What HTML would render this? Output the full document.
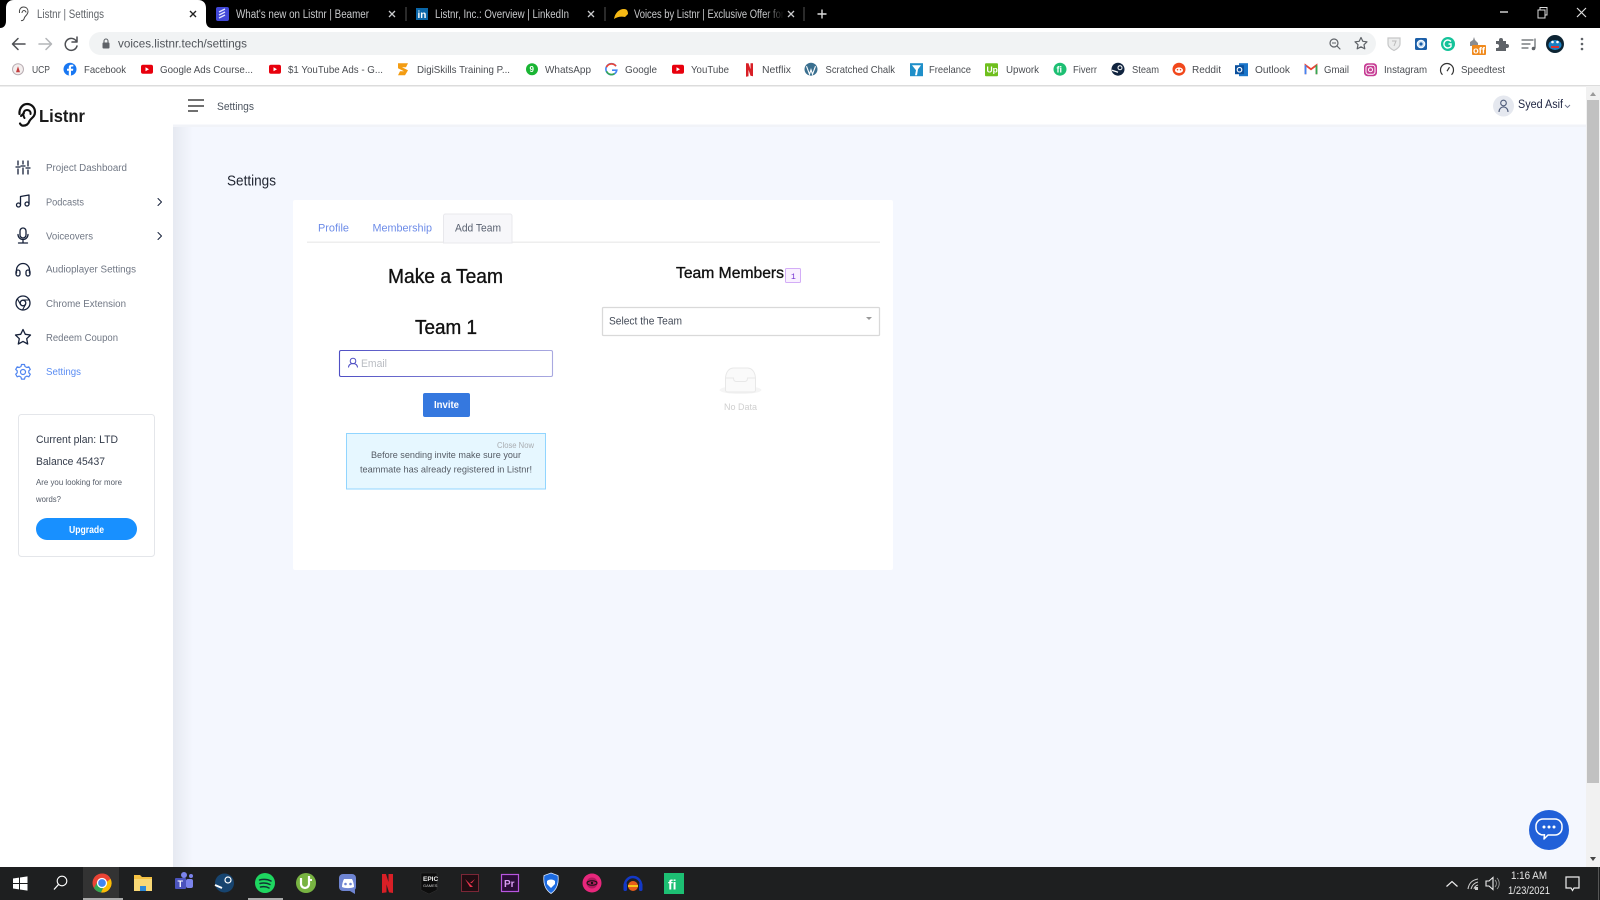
<!DOCTYPE html>
<html lang="en"><head><meta charset="utf-8"><title>Listnr | Settings</title>
<style>
html,body{margin:0;padding:0;width:1600px;height:900px;overflow:hidden;background:#fff}
svg{display:block;filter:blur(.3px)}
text{font-family:"Liberation Sans",sans-serif;white-space:pre}
.tab{font-size:11.5px;fill:#c9cacc}
.bm{font-size:10.5px;fill:#4a4d52}
.menu{font-size:10px;fill:#707784}
.ic{fill:none;stroke:#16213a;stroke-width:1.3;stroke-linecap:round;stroke-linejoin:round}
.tb{fill:none;stroke:#5f6368;stroke-width:1.5;stroke-linecap:round;stroke-linejoin:round}
</style></head><body>
<svg xmlns="http://www.w3.org/2000/svg" width="1600" height="900" viewBox="0 0 1600 900">
<defs>
<linearGradient id="sh" x1="0" x2="1" y1="0" y2="0"><stop offset="0" stop-color="#e6e9f1"/><stop offset="1" stop-color="#f4f7fe"/></linearGradient>
<linearGradient id="fade" x1="0" x2="1" y1="0" y2="0"><stop offset="0" stop-color="#000" stop-opacity="0"/><stop offset="1" stop-color="#000"/></linearGradient>
<linearGradient id="inp" x1="0" x2="1" y1="0" y2="0"><stop offset="0" stop-color="#4f4fc4"/><stop offset="1" stop-color="#a9a9e0"/></linearGradient>
</defs>
<!-- page -->
<rect width="1600" height="900" fill="#fff"/>
<rect x="173" y="126" width="1413" height="741" fill="#f4f7fe"/>
<rect x="173" y="126" width="20" height="741" fill="url(#sh)"/>
<rect x="173" y="124.500" width="1413" height="2.500" fill="#f1f3f8"/>

<!-- tab strip -->
<rect width="1600" height="28" fill="#000"/>
<path d="M0 28C4 28 6 25 6 21V8C6 3 9 0 14 0H198C203 0 206 3 206 8V21C206 25 208 28 212 28Z" fill="#fff"/>
<path d="M19.500 13C19 9 21 7 23.500 7 26.500 7 28 9 28 11.500 28 14.500 25.500 15.500 24.500 17.500 24 20 22.500 21 21 20.500M22 13c0-1.500 1-2.500 2-2.500s2 1 2 2" fill="none" stroke="#444" stroke-width="1"/>
<text x="37" y="18" class="tab" style="fill:#5f6368" textLength="67" lengthAdjust="spacingAndGlyphs">Listnr | Settings</text>
<path d="M190 11l6 6M196 11l-6 6" stroke="#222" stroke-width="1.400"/>
<rect x="216" y="7" width="13" height="14" rx="2" fill="#4148d8"/>
<path d="M219 12l6-3M219 15l6-3M219 18l6-3" stroke="#dfe3ff" stroke-width="1.400"/>
<text x="236" y="18" class="tab" textLength="133" lengthAdjust="spacingAndGlyphs">What's new on Listnr | Beamer</text>
<path d="M389 11l6 6M395 11l-6 6" stroke="#c9cacc" stroke-width="1.300"/>
<rect x="405.500" y="7" width="1" height="14" fill="#555"/>
<rect x="416" y="8" width="12" height="12" fill="#0a66a8"/>
<text x="417.500" y="18" style="font-size:10px;font-weight:bold;fill:#fff">in</text>
<text x="435" y="18" class="tab" textLength="134" lengthAdjust="spacingAndGlyphs">Listnr, Inc.: Overview | LinkedIn</text>
<path d="M588 11l6 6M594 11l-6 6" stroke="#c9cacc" stroke-width="1.300"/>
<rect x="604.500" y="7" width="1" height="14" fill="#555"/>
<path d="M614 19c1-6 5-10 10-10 3 0 4 2 4 5l-3 3c-4-1-8 0-11 2Z" fill="#f6b915"/>
<text x="634" y="18" class="tab" textLength="150" lengthAdjust="spacingAndGlyphs">Voices by Listnr | Exclusive Offer for</text>
<rect x="765" y="6" width="19" height="16" fill="url(#fade)"/>
<path d="M788 11l6 6M794 11l-6 6" stroke="#c9cacc" stroke-width="1.300"/>
<rect x="803.500" y="7" width="1" height="14" fill="#555"/>
<path d="M822 9.500v9M817.500 14h9" stroke="#ddd" stroke-width="1.400"/>
<path d="M1500 12h8" stroke="#ddd" stroke-width="1.400"/>
<path d="M1538 10h7v8h-7ZM1540 10V7.500h7V15h-2" fill="none" stroke="#ddd" stroke-width="1"/>
<path d="M1577 8l9 9M1586 8l-9 9" stroke="#ddd" stroke-width="1.200"/>

<!-- toolbar -->
<path d="M25 44H13M18 38.500L12.500 44l5.500 5.500" class="tb" style="stroke:#4d4f53"/>
<path d="M39 44h12M46 38.500l5.500 5.500-5.500 5.500" class="tb" style="stroke:#b3b5b8"/>
<path d="M76.500 41.500a6 6 0 1 0 .5 4.500M77 37v5h-5" class="tb" style="stroke:#4d4f53"/>
<rect x="89" y="32" width="1287" height="23" rx="11.500" fill="#f1f3f4"/>
<rect x="102.500" y="42.500" width="7" height="6" rx="1" fill="#5f6368"/>
<path d="M104 43v-2a2 2 0 0 1 4 0v2" fill="none" stroke="#5f6368" stroke-width="1.100"/>
<text x="118" y="47.500" style="font-size:12px;fill:#50545a" textLength="129" lengthAdjust="spacingAndGlyphs">voices.listnr.tech/settings</text>
<circle cx="1334" cy="43" r="4" class="tb" style="stroke-width:1.200"/><path d="M1337 46l3 3" class="tb" style="stroke-width:1.200"/><path d="M1332 43h4" stroke="#5f6368"/>
<path d="M1361 37.500l1.800 3.800 4.200.5-3 2.900.8 4.100-3.800-2-3.800 2 .8-4.100-3-2.900 4.200-.5Z" class="tb" style="stroke-width:1.200"/>
<path d="M1388 38h12v6c0 3-3 5-6 6.500-3-1.500-6-3.500-6-6.500Z" fill="#eceded" stroke="#c6c7c8" stroke-width="1.200"/><path d="M1392 41h4l-2 5" fill="none" stroke="#bbb"/>
<rect x="1415" y="38" width="12" height="12" rx="1.500" fill="#1c5fa8"/><circle cx="1421" cy="44" r="3.800" fill="#cfe3f5" stroke="#fff"/><circle cx="1421" cy="44" r="1.600" fill="#1c5fa8"/>
<circle cx="1448" cy="44" r="7" fill="#15c39a"/><path d="M1451 41.500a4 4 0 1 0 0 5v-2.500h-2.500" fill="none" stroke="#fff" stroke-width="1.400"/>
<path d="M1470 46v-4l3-2 1-3 1 3 3 3v3Z" fill="#8a8d92"/>
<rect x="1472" y="45" width="14" height="10" rx="1" fill="#f08a1d"/>
<text x="1473" y="53.500" style="font-size:9px;font-weight:bold;fill:#fff" textLength="12" lengthAdjust="spacingAndGlyphs">off</text>
<path d="M1496 41h3v-1a2 2 0 0 1 4 0v1h3v3h1a2 2 0 0 1 0 4h-1v3h-10v-3h1a2 2 0 0 0 0-4h-1Z" fill="#5f6368"/>
<path d="M1522 40h11M1522 44h8M1522 48h6" class="tb" style="stroke-width:1.200"/><path d="M1535 39v9" class="tb" style="stroke-width:1.200"/><circle cx="1533.500" cy="48.500" r="1.800" fill="#5f6368"/>
<circle cx="1555" cy="44" r="9" fill="#0d2433"/><ellipse cx="1555" cy="45" rx="6.500" ry="5" fill="#1a80c4"/><path d="M1551 46h8v2h-8Z" fill="#d33"/><circle cx="1552.500" cy="42" r="1.300" fill="#fff"/><circle cx="1557.500" cy="42" r="1.300" fill="#fff"/>
<circle cx="1582" cy="39" r="1.300" fill="#5f6368"/><circle cx="1582" cy="44" r="1.300" fill="#5f6368"/><circle cx="1582" cy="49" r="1.300" fill="#5f6368"/>

<!-- bookmarks -->
<rect x="0" y="85" width="1600" height="1.500" fill="#dcdcdc"/>
<g transform="translate(0,-.8)">
<circle cx="18" cy="70" r="5.500" fill="#f3eeee" stroke="#b9aeb3"/><path d="M16 73l2-6 2 6Z" fill="#c43c3c"/>
<text x="32" y="74" class="bm" textLength="18" lengthAdjust="spacingAndGlyphs">UCP</text>
<circle cx="70" cy="70" r="6.500" fill="#1877f2"/><path d="M71 76.500v-5h2l.3-2H71v-1.200c0-.7.3-1 1-1h1.300v-1.800H71.500c-1.900 0-2.700 1-2.700 2.700v1.300H67v2h1.800v5Z" fill="#fff"/>
<text x="84" y="74" class="bm" textLength="42" lengthAdjust="spacingAndGlyphs">Facebook</text>
<rect x="141" y="65.500" width="12" height="9" rx="2" fill="#e8000d"/><path d="M145.500 68v4l3.500-2Z" fill="#fff"/>
<text x="160" y="74" class="bm" textLength="93" lengthAdjust="spacingAndGlyphs">Google Ads Course...</text>
<rect x="269" y="65.500" width="12" height="9" rx="2" fill="#e8000d"/><path d="M273.500 68v4l3.500-2Z" fill="#fff"/>
<text x="288" y="74" class="bm" textLength="95" lengthAdjust="spacingAndGlyphs">$1 YouTube Ads - G...</text>
<path d="M398 64h10l-2 4h-4l6 3-3 5h-7l2-4h4l-6-3Z" fill="#f39c12"/>
<text x="417" y="74" class="bm" textLength="93" lengthAdjust="spacingAndGlyphs">DigiSkills Training P...</text>
<circle cx="532" cy="70" r="6" fill="#19b533"/><text x="529.500" y="73" style="font-size:8px;font-weight:bold;fill:#fff">9</text>
<text x="545" y="74" class="bm" textLength="46" lengthAdjust="spacingAndGlyphs">WhatsApp</text>
<path d="M616 67a5.500 5.500 0 1 0 .8 4h-4.800" fill="none" stroke="#4285f4" stroke-width="1.600"/><path d="M616 67a5.500 5.500 0 0 0-9.500 1" fill="none" stroke="#ea4335" stroke-width="1.600"/><path d="M606.500 72a5.500 5.500 0 0 0 8 2.500" fill="none" stroke="#34a853" stroke-width="1.600"/>
<text x="625" y="74" class="bm" textLength="32" lengthAdjust="spacingAndGlyphs">Google</text>
<rect x="672" y="65.500" width="12" height="9" rx="2" fill="#e8000d"/><path d="M676.500 68v4l3.500-2Z" fill="#fff"/>
<text x="691" y="74" class="bm" textLength="38" lengthAdjust="spacingAndGlyphs">YouTube</text>
<path d="M746 64h2.500l2 6v-6h2.500v13l-2.500-.5-2-6v6.500l-2.500.5Z" fill="#d81f26"/>
<text x="762" y="74" class="bm" textLength="29" lengthAdjust="spacingAndGlyphs">Netflix</text>
<circle cx="811" cy="70" r="6.500" fill="#3a6f8f"/><path d="M806.500 67l3 8 1.500-4.500 1.500 4.500 3-8" fill="none" stroke="#fff" stroke-width="1.100"/>
<text x="825.500" y="74" class="bm" textLength="69.500" lengthAdjust="spacingAndGlyphs">Scratched Chalk</text>
<rect x="910" y="64" width="13" height="13" fill="#1f8fc9"/><path d="M912 66h9l-3 4-1 6h-2l1-5Z" fill="#fff"/>
<text x="929" y="74" class="bm" textLength="42" lengthAdjust="spacingAndGlyphs">Freelance</text>
<rect x="985" y="64" width="13" height="13" rx="1" fill="#6fbf1d"/><text x="986.500" y="73.500" style="font-size:8.500px;font-weight:bold;fill:#fff">Up</text>
<text x="1006" y="74" class="bm" textLength="33" lengthAdjust="spacingAndGlyphs">Upwork</text>
<circle cx="1060" cy="70" r="6.500" fill="#1dbf73"/><text x="1056.500" y="73.500" style="font-size:9px;font-weight:bold;fill:#fff">fi</text>
<text x="1073" y="74" class="bm" textLength="24" lengthAdjust="spacingAndGlyphs">Fiverr</text>
<circle cx="1118" cy="70" r="6.500" fill="#10243f"/><circle cx="1120" cy="68.500" r="2" fill="none" stroke="#fff"/><path d="M1112 71l6 2" stroke="#fff" stroke-width="1.300"/>
<text x="1132" y="74" class="bm" textLength="27" lengthAdjust="spacingAndGlyphs">Steam</text>
<circle cx="1179" cy="70" r="6.500" fill="#f1481c"/><ellipse cx="1179" cy="71" rx="4" ry="2.800" fill="#fff"/><circle cx="1177.500" cy="70.500" r=".8" fill="#f1481c"/><circle cx="1180.500" cy="70.500" r=".8" fill="#f1481c"/>
<text x="1192" y="74" class="bm" textLength="29" lengthAdjust="spacingAndGlyphs">Reddit</text>
<rect x="1239" y="64" width="9" height="13" fill="#1a75c9"/><rect x="1235" y="66" width="9" height="9" fill="#0b4f9c"/><circle cx="1239.500" cy="70.500" r="2.300" fill="none" stroke="#fff" stroke-width="1.100"/>
<text x="1255" y="74" class="bm" textLength="35" lengthAdjust="spacingAndGlyphs">Outlook</text>
<path d="M1305.500 75V66l5.500 4 5.500-4v9" fill="none" stroke="#ea4335" stroke-width="1.800"/><path d="M1305.500 66v9" stroke="#4285f4" stroke-width="1.800"/><path d="M1316.500 66v9" stroke="#34a853" stroke-width="1.800"/>
<text x="1324" y="74" class="bm" textLength="25" lengthAdjust="spacingAndGlyphs">Gmail</text>
<rect x="1364" y="64" width="13" height="13" rx="3.500" fill="#c63b93"/><rect x="1366" y="66" width="9" height="9" rx="2.500" fill="none" stroke="#fff"/><circle cx="1370.500" cy="70.500" r="2" fill="none" stroke="#fff"/>
<text x="1384" y="74" class="bm" textLength="43" lengthAdjust="spacingAndGlyphs">Instagram</text>
<path d="M1442.500 75.500a6.500 6.500 0 1 1 9 0" fill="none" stroke="#333" stroke-width="1.200"/><path d="M1447 72l2.500-4" stroke="#333" stroke-width="1.200"/>
<text x="1461" y="74" class="bm" textLength="44" lengthAdjust="spacingAndGlyphs">Speedtest</text>
</g>

<!-- header -->
<path d="M188 100h16M188 106h16M188 111h10" stroke="#1a1a1a" stroke-width="1.300"/>
<text x="217" y="110" style="font-size:11px;fill:#4d5560" textLength="37" lengthAdjust="spacingAndGlyphs">Settings</text>
<circle cx="1503.500" cy="106" r="10.500" fill="#e5e8ef"/>
<circle cx="1503.500" cy="103" r="2.800" fill="none" stroke="#4d5a78" stroke-width="1.100"/><path d="M1499 112c0-3 2-5 4.500-5s4.500 2 4.500 5" fill="none" stroke="#4d5a78" stroke-width="1.100"/>
<text x="1518" y="108" style="font-size:11.500px;fill:#1c2340" textLength="45" lengthAdjust="spacingAndGlyphs">Syed Asif</text>
<path d="M1565 105l2.500 2.500 2.500-2.500" fill="none" stroke="#6a7088" stroke-width=".9"/>

<!-- sidebar logo -->
<path d="M19.500 114C19 108 23 104 27 104 32 104 35 108 35 112 35 117 31 118 29.500 121 28 125 25 126 22 125.500 21 125 20.500 124.500 20 123.500" fill="none" stroke="#111" stroke-width="2.200" stroke-linecap="round"/>
<path d="M24.500 118C22 114 24 110 27 110 29.500 110 31 112 30.500 114M24 113l-3 3" fill="none" stroke="#111" stroke-width="2" stroke-linecap="round"/>
<text x="39" y="122" style="font-size:17.500px;font-weight:bold;fill:#1a1a1a" textLength="46" lengthAdjust="spacingAndGlyphs">Listnr</text>

<!-- menu -->
<path d="M18 161v4M18 169v5M23 161v3M23 168v6M28 161v5M28 170v4M16 167h4M21 166h4M26 168h4" class="ic"/>
<text x="46" y="171" class="menu" textLength="81" lengthAdjust="spacingAndGlyphs">Project Dashboard</text>
<path d="M20.500 205v-8.500l8.500-1.500v9" class="ic"/><circle cx="18.500" cy="205" r="2" class="ic"/><circle cx="27" cy="204" r="2" class="ic"/>
<text x="46" y="205.500" class="menu" textLength="38" lengthAdjust="spacingAndGlyphs">Podcasts</text>
<path d="M158 198.500l3.500 3.500-3.500 3.500" class="ic" style="stroke-width:1"/>
<rect x="20" y="228" width="6" height="10" rx="3" class="ic"/><path d="M18 234.500a5 5 0 0 0 10 0M23 240v2.500M18.500 243h9" class="ic"/>
<text x="46" y="239.500" class="menu" textLength="47" lengthAdjust="spacingAndGlyphs">Voiceovers</text>
<path d="M158 232.500l3.500 3.500-3.500 3.500" class="ic" style="stroke-width:1"/>
<path d="M16.500 273v-3a6.500 6.500 0 0 1 13 0v3" class="ic"/><rect x="16" y="270" width="4" height="6" rx="2" class="ic"/><rect x="26" y="270" width="4" height="6" rx="2" class="ic"/>
<text x="46" y="272.500" class="menu" textLength="90" lengthAdjust="spacingAndGlyphs">Audioplayer Settings</text>
<circle cx="23" cy="303" r="7" class="ic"/><circle cx="23" cy="303" r="2.800" class="ic"/><path d="M23 300h6.500M20.500 304.500l-3-5.500M25.500 304.500l-3 5.500" class="ic" style="stroke-width:1.100"/>
<text x="46" y="307" class="menu" textLength="80" lengthAdjust="spacingAndGlyphs">Chrome Extension</text>
<path d="M23 329.500l2.300 4.800 5.200.7-3.800 3.700 1 5.300-4.700-2.600-4.700 2.600 1-5.300-3.800-3.700 5.200-.7Z" class="ic"/>
<text x="46" y="341" class="menu" textLength="72" lengthAdjust="spacingAndGlyphs">Redeem Coupon</text>
<circle cx="23" cy="372" r="2.500" fill="none" stroke="#4f85f0" stroke-width="1.200"/>
<path d="M21.500 364.500h3l.5 2 1.800 1 2-.7 1.500 2.600-1.500 1.400v2l1.500 1.400-1.500 2.600-2-.7-1.800 1-.5 2h-3l-.5-2-1.800-1-2 .7-1.500-2.600 1.500-1.400v-2l-1.500-1.400 1.500-2.600 2 .7 1.800-1Z" fill="none" stroke="#4f85f0" stroke-width="1.200" stroke-linejoin="round"/>
<text x="46" y="375" class="menu" style="fill:#5b8df3" textLength="35" lengthAdjust="spacingAndGlyphs">Settings</text>

<!-- plan card -->
<rect x="18.500" y="414.500" width="136" height="142" rx="3" fill="#fff" stroke="#e4e6ea"/>
<text x="36" y="443" style="font-size:11px;fill:#333b4a" textLength="82" lengthAdjust="spacingAndGlyphs">Current plan: LTD</text>
<text x="36" y="465" style="font-size:11px;fill:#333b4a" textLength="69" lengthAdjust="spacingAndGlyphs">Balance 45437</text>
<text x="36" y="485" style="font-size:8.500px;fill:#555c68" textLength="86" lengthAdjust="spacingAndGlyphs">Are you looking for more</text>
<text x="36" y="502" style="font-size:8.500px;fill:#555c68" textLength="25" lengthAdjust="spacingAndGlyphs">words?</text>
<rect x="36" y="518" width="101" height="22" rx="11" fill="#1890ff"/>
<text x="69" y="533" style="font-size:10px;font-weight:bold;fill:#fff" textLength="35" lengthAdjust="spacingAndGlyphs">Upgrade</text>

<!-- page title -->
<text x="227" y="185.500" style="font-size:15px;fill:#1f2430" textLength="49" lengthAdjust="spacingAndGlyphs">Settings</text>

<!-- main card -->
<rect x="293" y="200" width="600" height="370" rx="2" fill="#fff"/>
<rect x="307" y="241.500" width="573" height="1.500" fill="#eeeeee"/>
<text x="318" y="231.500" style="font-size:11px;fill:#6d8ce8" textLength="31" lengthAdjust="spacingAndGlyphs">Profile</text>
<text x="372.500" y="231.500" style="font-size:11px;fill:#6d8ce8" textLength="59.500" lengthAdjust="spacingAndGlyphs">Membership</text>
<path d="M443.500 243V216a2 2 0 0 1 2-2H510a2 2 0 0 1 2 2v27Z" fill="#f7f7fa" stroke="#e8e8ec"/>
<text x="455" y="231.500" style="font-size:11px;fill:#596170" textLength="46" lengthAdjust="spacingAndGlyphs">Add Team</text>
<text x="388" y="283" style="font-size:20px;fill:#111" stroke="#111" stroke-width=".35" textLength="115" lengthAdjust="spacingAndGlyphs">Make a Team</text>
<text x="415" y="334" style="font-size:20px;fill:#111" stroke="#111" stroke-width=".35" textLength="62" lengthAdjust="spacingAndGlyphs">Team 1</text>
<rect x="339.500" y="350.500" width="213" height="26" rx="1.500" fill="#fff" stroke="url(#inp)" stroke-width="1.100"/>
<circle cx="353" cy="361" r="2.800" fill="none" stroke="#4f4fc4" stroke-width="1"/><path d="M348.500 367.500c0-2.500 2-4 4.500-4s4.500 1.500 4.500 4" fill="none" stroke="#4f4fc4" stroke-width="1"/>
<text x="361" y="367" style="font-size:11px;fill:#b9bcc2" textLength="26" lengthAdjust="spacingAndGlyphs">Email</text>
<rect x="423" y="393" width="47" height="24" rx="2" fill="#3578df"/>
<text x="434" y="408" style="font-size:10px;font-weight:bold;fill:#fff" textLength="25" lengthAdjust="spacingAndGlyphs">Invite</text>
<rect x="346.500" y="433.500" width="199" height="55.500" fill="#e6f7ff" stroke="#91d5ff"/>
<text x="497" y="448" style="font-size:8px;fill:#a9acb0" textLength="37" lengthAdjust="spacingAndGlyphs">Close Now</text>
<text x="371" y="458" style="font-size:9.500px;fill:#555b64" textLength="150" lengthAdjust="spacingAndGlyphs">Before sending invite make sure your</text>
<text x="360" y="472.500" style="font-size:9.500px;fill:#555b64" textLength="172" lengthAdjust="spacingAndGlyphs">teammate has already registered in Listnr!</text>

<text x="676" y="278" style="font-size:15.500px;fill:#111" stroke="#111" stroke-width=".35" textLength="108" lengthAdjust="spacingAndGlyphs">Team Members</text>
<rect x="785.500" y="268.500" width="15" height="14" rx="1" fill="#f9f0ff" stroke="#d3adf7"/>
<text x="791" y="279" style="font-size:8px;font-family:'Liberation Mono',monospace;fill:#722ed1">1</text>
<rect x="602.500" y="307.500" width="277" height="28" rx="1" fill="#fff" stroke="#d9d9d9" stroke-width="1.300"/>
<text x="609" y="324.500" style="font-size:11px;fill:#444b58" textLength="73" lengthAdjust="spacingAndGlyphs">Select the Team</text>
<path d="M866 317h6l-3 3Z" fill="#999"/>
<ellipse cx="740.500" cy="390" rx="21" ry="4" fill="#f5f5f5"/>
<path d="M725.500 379c0-6 3-11 8-11h14c5 0 8 5 8 11v11a2 2 0 0 1-2 2h-26a2 2 0 0 1-2-2Z" fill="#fafafa" stroke="#e8e8e8"/>
<path d="M725.500 378h8c0 2.500 1 3.500 3 3.500h8c2 0 3-1 3-3.500h8" fill="none" stroke="#e8e8e8"/>
<text x="724" y="410" style="font-size:9.500px;fill:#cfcfcf" textLength="33" lengthAdjust="spacingAndGlyphs">No Data</text>

<!-- scrollbar -->
<rect x="1586" y="86" width="14" height="781" fill="#f1f1f1"/>
<path d="M1590 96l3-4 3 4Z" fill="#9a9a9a"/>
<rect x="1587" y="100" width="12" height="683" fill="#c1c1c1"/>
<path d="M1590 857l3 4 3-4Z" fill="#444"/>

<!-- chat -->
<circle cx="1549" cy="830" r="20" fill="#2160d8"/>
<path d="M1543 819h12a7 7 0 0 1 7 7v2a7 7 0 0 1-7 7h-7l-4 4 .5-4.300a7 7 0 0 1-8.500-6.700v-2a7 7 0 0 1 7-7Z" fill="none" stroke="#fff" stroke-width="1.500" stroke-linejoin="round"/>
<circle cx="1544" cy="827" r="1.500" fill="#fff"/><circle cx="1549" cy="827" r="1.500" fill="#fff"/><circle cx="1554" cy="827" r="1.500" fill="#fff"/>

<!-- taskbar -->
<rect y="867" width="1600" height="33" fill="#1e1f20"/>
<rect x="83" y="867" width="36" height="33" fill="#333"/>
<rect x="83" y="898" width="40" height="2" fill="#aaa"/><rect x="248" y="898" width="35" height="2" fill="#aaa"/>
<path d="M13 878.500l6-.9v5.400h-6ZM20 877.500l7.500-1.100v6.600H20ZM13 884h6v5.400l-6-.9ZM20 884h7.500v6.600l-7.500-1.100Z" fill="#fff"/>
<circle cx="62" cy="881" r="4.800" fill="none" stroke="#fff" stroke-width="1.100"/><path d="M58.500 884.500l-4.500 5" stroke="#fff" stroke-width="1.300"/>
<circle cx="102" cy="883" r="9.500" fill="#ea4335"/><path d="M102 873.500a9.500 9.500 0 0 1 8.500 5.200H102Z" fill="#ea4335"/><path d="M110.500 878.700A9.500 9.500 0 0 1 101 892.500l4-9Z" fill="#fbbc05"/><path d="M94 888a9.500 9.500 0 0 0 7 4.500l4-9-8-1Z" fill="#34a853"/><circle cx="102" cy="883" r="4.500" fill="#4285f4" stroke="#fff" stroke-width="1.300"/>
<path d="M134 875h6l2 2h10v14h-18Z" fill="#f5c243"/><rect x="134" y="879" width="18" height="12" fill="#f8d876"/><path d="M140 891v-5h6v5" fill="#2b88d8"/>
<rect x="175" y="878" width="11" height="11" rx="1" fill="#4b53bc"/><text x="177.500" y="887" style="font-size:9px;font-weight:bold;fill:#fff">T</text><circle cx="184" cy="875" r="3" fill="#7b83eb"/><rect x="186" y="879" width="7" height="9" rx="2" fill="#7b83eb"/><circle cx="191" cy="876" r="2" fill="#7b83eb"/>
<circle cx="224.500" cy="883" r="9.500" fill="#17446f"/><circle cx="228" cy="880" r="3" fill="none" stroke="#fff" stroke-width="1.200"/><path d="M215 885l7 3" stroke="#fff" stroke-width="2"/>
<circle cx="265" cy="883" r="10" fill="#1ed760"/><path d="M259.500 880c4-1 8-.8 11.500 1M260 883.500c3.500-.8 7-.6 10 1M260.500 887c3-.6 6-.4 8.500 1" fill="none" stroke="#133" stroke-width="1.500" stroke-linecap="round"/>
<circle cx="306" cy="883" r="10" fill="#78b342"/><path d="M301 878v6a4 4 0 0 0 8 0v-8" fill="none" stroke="#fff" stroke-width="2.200"/><path d="M309 880h3" stroke="#fff" stroke-width="2"/>
<rect x="339" y="874" width="17" height="17" rx="4" fill="#6f85d2"/><path d="M350 891l5 3v-4Z" fill="#6f85d2"/><path d="M342 887c0-3 1-6 2-8h8c1 2 2 5 2 8-3 1.500-9 1.500-12 0Z" fill="#fff"/><circle cx="345.500" cy="884" r="1.300" fill="#6f85d2"/><circle cx="350.500" cy="884" r="1.300" fill="#6f85d2"/>
<path d="M382 874h4l2.500 8v-8H393v19l-4-.6-2.500-8v8l-4.500.6Z" fill="#d81f26"/>
<path d="M421 873h16v17l-8 4-8-4Z" fill="#0d0d0d" stroke="#333" stroke-width=".5"/><text x="423" y="881" style="font-size:6.500px;font-weight:bold;fill:#eee">EPIC</text><text x="423" y="887" style="font-size:4px;fill:#ccc">GAMES</text>
<rect x="461.500" y="874.500" width="17" height="17" fill="#200d12" stroke="#7b2636"/><path d="M465 879l5 8h3l-8-8ZM475 879l-3 4h-2l5-4Z" fill="#e8344d"/>
<rect x="501.500" y="874.500" width="17" height="17" fill="#2a0d37" stroke="#b956e0" stroke-width="1.200"/><text x="504" y="887" style="font-size:10px;fill:#d99cf3;font-weight:bold">Pr</text>
<path d="M551 873l7 2.500c1 8-1 14-7 18-6-4-8-10-7-18Z" fill="#1d6be0" stroke="#ddeaff" stroke-width=".8"/><path d="M547 881c2-2 6-2 8 0v3l-4 4-4-4Z" fill="#fff"/>
<circle cx="592" cy="883" r="9.500" fill="#e8277c"/><circle cx="592" cy="883" r="5.500" fill="#b01a5e"/><ellipse cx="592" cy="883" rx="5" ry="2.300" fill="none" stroke="#111"/><circle cx="592" cy="883" r="1.200" fill="#111"/>
<path d="M625 885a8 8 0 0 1 16 0" fill="none" stroke="#1338c6" stroke-width="2.500"/><rect x="623.500" y="883" width="3.500" height="8" rx="1.500" fill="#1338c6"/><rect x="639" y="883" width="3.500" height="8" rx="1.500" fill="#1338c6"/><circle cx="633" cy="886" r="5" fill="#e55d1a"/><rect x="628" y="885" width="10" height="2" fill="#f5c518"/>
<rect x="664" y="873" width="20" height="21" fill="#1dbf73"/><text x="668" y="889.500" style="font-size:14px;font-weight:bold;fill:#fff">fi</text>
<path d="M1446.500 886.500l5.500-5 5.500 5" fill="none" stroke="#eee" stroke-width="1.200"/>
<path d="M1468 889c1-6 4-9 10-10M1471 889c1-4 3-6 7-7M1474 889c.5-2 2-3.500 4-4" fill="none" stroke="#ccc" stroke-width="1.100"/><rect x="1475" y="887" width="3" height="3" fill="#ccc"/>
<path d="M1486 881h3l4-3.500v12l-4-3.500h-3Z" fill="none" stroke="#eee" stroke-width="1.100"/><path d="M1495 880a5 5 0 0 1 0 7M1497 878a8 8 0 0 1 0 11" fill="none" stroke="#999" stroke-width=".9"/>
<text x="1511" y="879" style="font-size:11px;fill:#e8e8e8" textLength="36" lengthAdjust="spacingAndGlyphs">1:16 AM</text>
<text x="1508" y="894" style="font-size:11px;fill:#e8e8e8" textLength="42" lengthAdjust="spacingAndGlyphs">1/23/2021</text>
<path d="M1566 877h13v11h-5l-1.500 2.500-1.500-2.500h-5Z" fill="none" stroke="#eee" stroke-width="1.200"/>
<rect x="1598" y="867" width="1" height="33" fill="#555"/>
</svg>
</body></html>
